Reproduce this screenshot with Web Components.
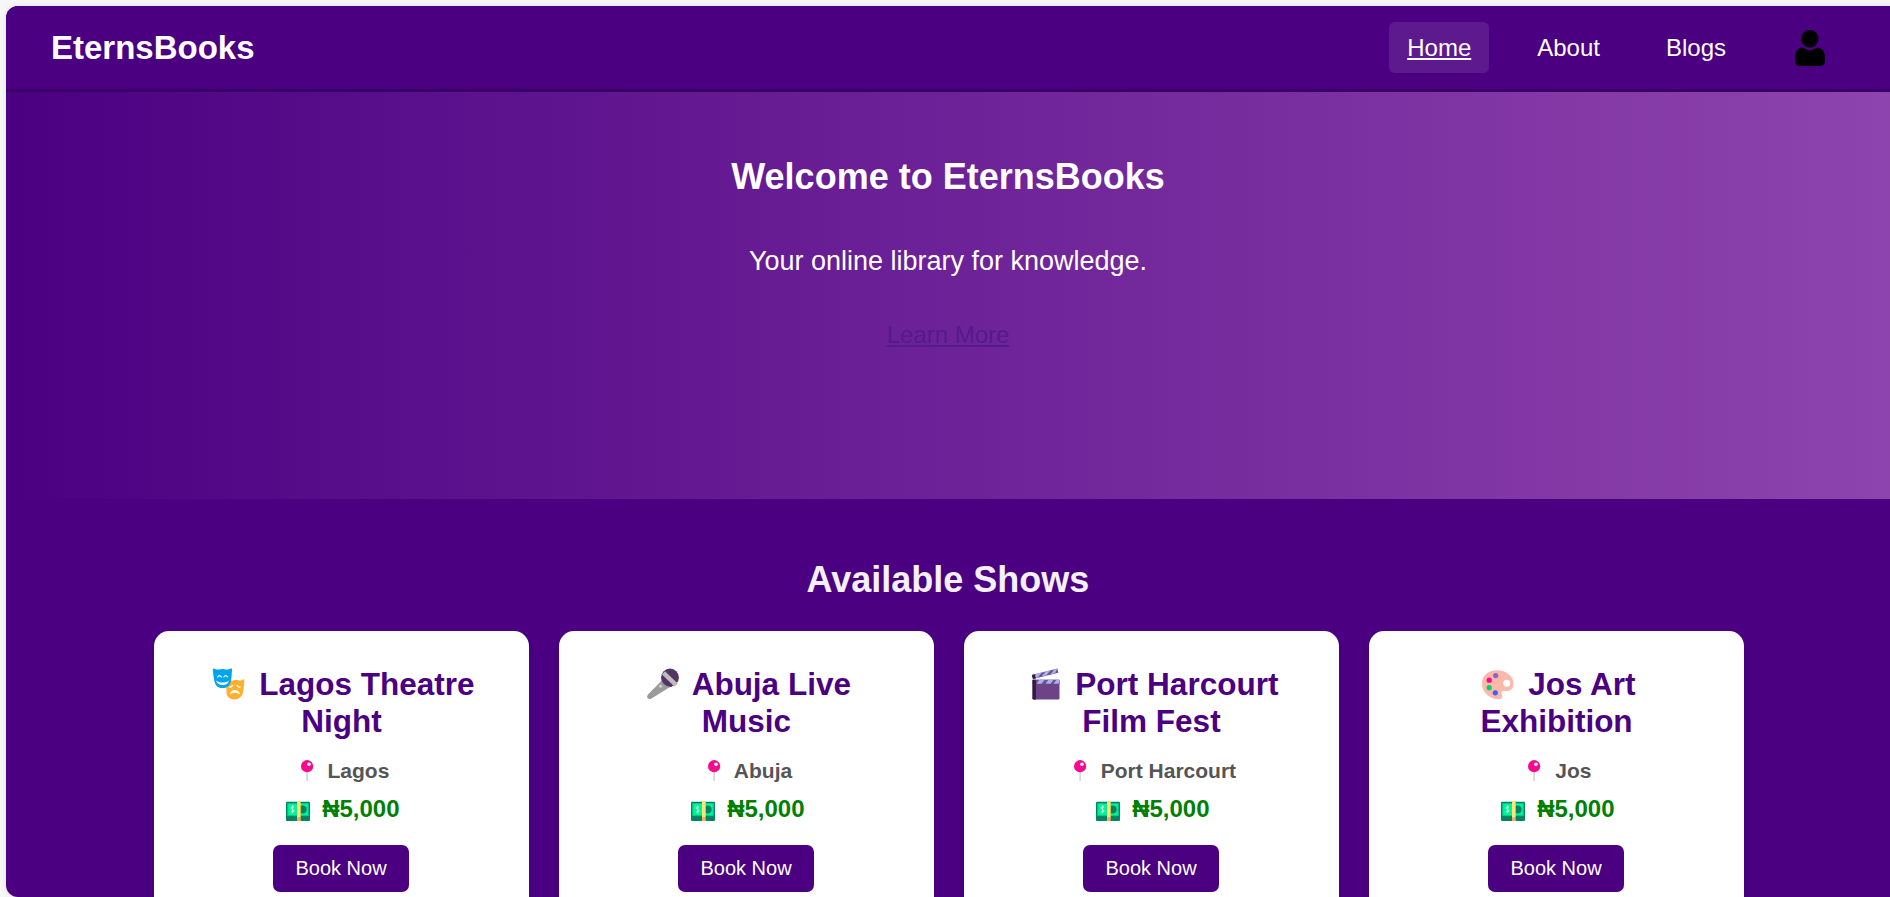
<!DOCTYPE html>
<html lang="en">
<head>
<meta charset="utf-8">
<title>EternsBooks</title>
<style>
html,body{margin:0;height:100%;overflow:hidden;background:#f7f7f7;font-family:"Liberation Sans",Arial,sans-serif}
</style>
</head>
<body>
<app-shell>
  <site-header>
    <span slot="brand">EternsBooks</span>
    <nav-link active>Home</nav-link>
    <nav-link>About</nav-link>
    <nav-link>Blogs</nav-link>
  </site-header>
  <hero-banner>
    <span slot="title">Welcome to EternsBooks</span>
    <span slot="text">Your online library for knowledge.</span>
    <span slot="link">Learn More</span>
  </hero-banner>
  <show-list>
    <span slot="title">Available Shows</span>
    <show-card icon="masks"><span slot="title">Lagos Theatre<br>Night</span><span slot="place">Lagos</span><span slot="price">₦5,000</span></show-card>
    <show-card icon="mic"><span slot="title">Abuja Live<br>Music</span><span slot="place">Abuja</span><span slot="price">₦5,000</span></show-card>
    <show-card icon="clapper"><span slot="title">Port Harcourt<br>Film Fest</span><span slot="place">Port Harcourt</span><span slot="price">₦5,000</span></show-card>
    <show-card icon="palette"><span slot="title">Jos Art<br>Exhibition</span><span slot="place">Jos</span><span slot="price">₦5,000</span></show-card>
  </show-list>
</app-shell>
<script>
const define = (name, render) => customElements.define(name, class extends HTMLElement {
  constructor() { super(); this.attachShadow({ mode: 'open' }); }
  connectedCallback() { this.shadowRoot.innerHTML = render(this); }
});

const ICONS = {
  masks: { w: 42, h: 32, d: -5, art: `
    <path d="M18.5 13.2C21 12.4 22.5 13 24 12.8c1.500-.2 2-.9 4-.9s3 .9 4.500 .6 2.500-1.300 3.500-1.200c.6 0 .5.900.3 2.200-.5 3.500-.4 7-1.300 11-1 4.200-4 6.900-8.300 6.900-4.500 0-7.700-2.300-8.200-6.500-.3-3 0-6-.3-9-.1-1.200-.2-2.400.3-2.700z" fill="#ffb02e"/>
    <path d="M5.600.4c1.600.1 2.500 1.200 5 1.200 2 0 2.500-.6 4-.6 1.600 0 2 .6 4 .6 2.300 0 3.500-1.300 5-1.200.8 0 .4 1.500.3 3-.3 4.500-.4 8-1.400 11-1.300 3.700-3.600 5.600-7.900 5.600s-6.700-2-7.800-5.600C5.600 10.500 5.500 7.500 5 3.400 4.900 1.500 4.800.4 5.600.4z" fill="#00a6ed"/>
    <path d="M8 12.500c4 2.800 9.500 2.800 13.200 0-1 3.200-3.400 4.400-6.600 4.400s-5.800-1.300-6.600-4.400z" fill="#fff"/>
    <path d="M9.600 9q1.900-2.800 3.800 0M15.800 9q1.900-2.800 3.800 0" fill="none" stroke="#fff" stroke-width="1.100" stroke-linecap="round"/>
    <path d="M21.700 26.300c1-3.200 3-4.200 5.200-4.200s4.400 1 5.100 4.200c-3.300-2-7-2-10.300 0z" fill="#fff"/>
    <path d="M21.200 19q2 .6 3.400-1.600M29 17.400q1.300 2.200 3.300 1.600" fill="none" stroke="#fff" stroke-width="1.100" stroke-linecap="round"/>` },
  mic: { w: 42, h: 32, d: -5, art: `
    <path d="M19.800 12.500L6 26.600c-1 1.200-1.100 2.800-.3 3.700.9 1.100 2.600 1 3.800.2L28 19z" fill="#9b9b9b"/>
    <circle cx="28" cy="9.500" r="8.900" fill="#533566"/>
    <path d="M20 6.500l3-3.300 13 12.600-3.600 2.600z" fill="#bebebe"/>
    <path d="M19.300 8.500c3 4.500 6 7.600 11.300 10.200-2 .4-4 .1-5-.6-3-1.300-6.400-5-6.300-9.600z" fill="#533566"/>
    <circle cx="18.700" cy="18.200" r="1.600" fill="#cdcdcd"/>` },
  clapper: { w: 42, h: 32, d: -5, art: `
    <path d="M6.800 7L32.500.5l.8 4.300L8 11z" fill="#635994"/>
    <path d="M11.500 5.800l5.300-1.300-4 4.900-5 1.300zM20.600 3.500l5-1.300-4.200 5-4.800 1.200zM29.200 1.400l3.300-.9-2.600 4.700-4.300 1z" fill="#b4acf0"/>
    <path d="M6.800 7l2.700-.7 1.600 3.900L8 11z" fill="#321b41"/>
    <rect x="7.500" y="11.800" width="27" height="19.700" rx="1.200" fill="#6d4287"/>
    <path d="M7.500 11.800h27v3.900h-27z" fill="#635994"/>
    <path d="M14.500 11.800h5l-2.900 4h-5zM23.500 11.800h5l-2.900 4h-5zM31.500 11.800h3v2.200l-1.400 1.800h-4.500z" fill="#b4acf0"/>
    <path d="M7.500 11.800h3.400v19.700H8.700q-1.200 0-1.200-1.200z" fill="#321b41"/>` },
  palette: { w: 42, h: 32, d: -5, art: `
    <path d="M20 2.200c9 0 16.500 6 16.500 13.200 0 4.800-3 8-7.800 7.600-3.800-.3-5.500.6-3.900 3.600 1.500 3.300-.5 5.400-4.800 4.600C11 29.800 5 24 5 15.500 5 7.800 11 2.200 20 2.200z" fill="#fbb8ab"/>
    <circle cx="29.700" cy="15.300" r="3.500" fill="#fff"/>
    <circle cx="18.700" cy="7.600" r="2.600" fill="#8d65c5"/><circle cx="12.200" cy="12.200" r="2.600" fill="#f70a8d"/>
    <circle cx="12.200" cy="19.700" r="2.600" fill="#00d26a"/><circle cx="18.300" cy="24.800" r="2.600" fill="#3f5fff"/>` },
  pin: { w: 29, h: 22, d: -4, art: `
    <path d="M13.300 11h1.600v9.500q-.8 1.200-1.600 0z" fill="#d3d3d3"/>
    <circle cx="14.100" cy="6.200" r="6.100" fill="#f70a8d"/><circle cx="16" cy="4.200" r="1.800" fill="#fff"/>` },
  cash: { w: 33, h: 20, d: -3.500, art: `
    <rect x="4" y="12" width="24" height="8" rx="1" fill="#008463"/>
    <rect x="4" y=".8" width="24" height="15.700" rx="1" fill="#008463"/>
    <rect x="5.300" y="2" width="21.400" height="13" fill="#00f397"/>
    <rect x="5.800" y="2.500" width="20.400" height="12" fill="none" stroke="#00b87c" stroke-width=".7"/>
    <circle cx="20.700" cy="8.500" r="3.900" fill="#008463"/>
    <path d="M12 6.200q-1.400-1.200-2.500-.1c-1.500 2 2.600 2 2.400 3.900-.3 1.700-2 1.200-2.900.4M10.600 4.300v8" fill="none" stroke="#e6fff3" stroke-width=".9"/>
    <path d="M15 .8h3.800v15.700H15z" fill="#fcd53f"/><path d="M15 16.500h3.800V20H15z" fill="#f3ad61"/>
    <path d="M15 .8h3v15.700h-3z" fill="#ffe478"/>` }
};

define('emoji-icon', el => {
  const i = ICONS[el.getAttribute('name')];
  return `<style>:host{display:inline-block;width:${i.w}px;height:${i.h}px;vertical-align:${i.d}px}svg{display:block}</style>
  <svg width="${i.w}" height="${i.h}" viewBox="0 0 ${i.w} ${i.h}" aria-hidden="true">${i.art}</svg>`;
});

define('app-shell', () => `<style>
  :host{display:flex;flex-direction:column;box-sizing:border-box;width:1886px;height:891px;margin:6px 0 0 6px;
    background:#4b0082;border-radius:12px 0 0 12px;overflow:hidden;box-shadow:0 0 6px rgba(0,0,0,.1)}
</style><slot></slot>`);

define('site-header', () => `<style>
  :host{display:flex;flex:none;align-items:center;justify-content:space-between;box-sizing:border-box;height:86px;
    padding:0 67px 0 45px;background:#4b0082;border-bottom:3px solid #3a0066;color:#fff}
  .brand{font-size:33px;font-weight:700;line-height:38px}
  nav{display:flex;align-items:center;gap:30px}
  svg{display:block;margin-left:21px}
</style>
<div class="brand"><slot name="brand"></slot></div>
<nav><slot></slot><svg width="30" height="36" viewBox="0 0 30 36" aria-label="Account">
  <circle cx="14.800" cy="8.700" r="8.800"/>
  <path d="M6.600 17.600c1.200-.1 1.800.3 2.600 1q5.600 3.600 11.400 0c.9-.7 1.500-1.100 2.700-1 4.500.6 6.700 5.500 6.700 10.500v2.600Q30 36 24.700 36H5.300Q0 36 0 30.700v-2.600c0-5 2.200-9.900 6.600-10.500z"/>
</svg></nav>`);

define('nav-link', el => `<style>
  :host{display:block}
  a{display:block;padding:12px 18px;border-radius:6px;font-size:24px;line-height:27px;color:#fff}
  :host([active]) a{background:rgba(255,255,255,.1);text-decoration:underline}
</style><a><slot></slot></a>`);

define('hero-banner', () => `<style>
  :host{display:flex;flex:none;flex-direction:column;align-items:center;box-sizing:border-box;height:407px;padding:64px 2px 0 0;
    background:linear-gradient(to right,#4b0082,#8e44ad);color:#fff}
  h1{margin:0;font-size:36px;line-height:42px}
  p{margin:48px 0 44px;font-size:27px;line-height:31px}
  a{font-size:24px;line-height:27px;color:#551a8b;text-decoration:underline}
</style>
<h1><slot name="title"></slot></h1><p><slot name="text"></slot></p><a><slot name="link"></slot></a>`);

define('show-list', () => `<style>
  :host{display:block;padding-top:60px}
  h2{margin:0 2px 30px 0;text-align:center;font-size:36px;line-height:42px;color:#f3f0f7}
  .grid{display:grid;grid-template-columns:repeat(4,375px);gap:30px;justify-content:center}
</style>
<h2><slot name="title"></slot></h2><div class="grid"><slot></slot></div>`);

define('show-card', el => `<style>
  :host{display:block;box-sizing:border-box;height:300px;padding-top:35px;border-radius:15px;background:#fff;text-align:center;
    white-space:nowrap;box-shadow:0 4px 10px rgba(0,0,0,.1)}
  h3{margin:0;font-size:31.5px;line-height:37px;color:#4b0082}
  .place{margin-top:16px;padding-right:1px;height:30px;font-size:21px;font-weight:700;line-height:30px;color:#555}
  .price{margin-top:5px;padding-right:1px;height:36px;font-size:24px;font-weight:700;line-height:36px;color:green}
  button{display:block;margin:18px 0 0 119px;width:136px;height:47px;padding:0;border:0;border-radius:7px;background:#4b0082;
    color:#fff;font:20px/23px "Liberation Sans",Arial,sans-serif}
</style>
<h3><emoji-icon name="${el.getAttribute('icon')}"></emoji-icon> <slot name="title"></slot></h3>
<div class="place"><emoji-icon name="pin"></emoji-icon> <slot name="place"></slot></div>
<div class="price"><emoji-icon name="cash"></emoji-icon> <slot name="price"></slot></div>
<button type="button">Book Now</button>`);
</script>
</body>
</html>
